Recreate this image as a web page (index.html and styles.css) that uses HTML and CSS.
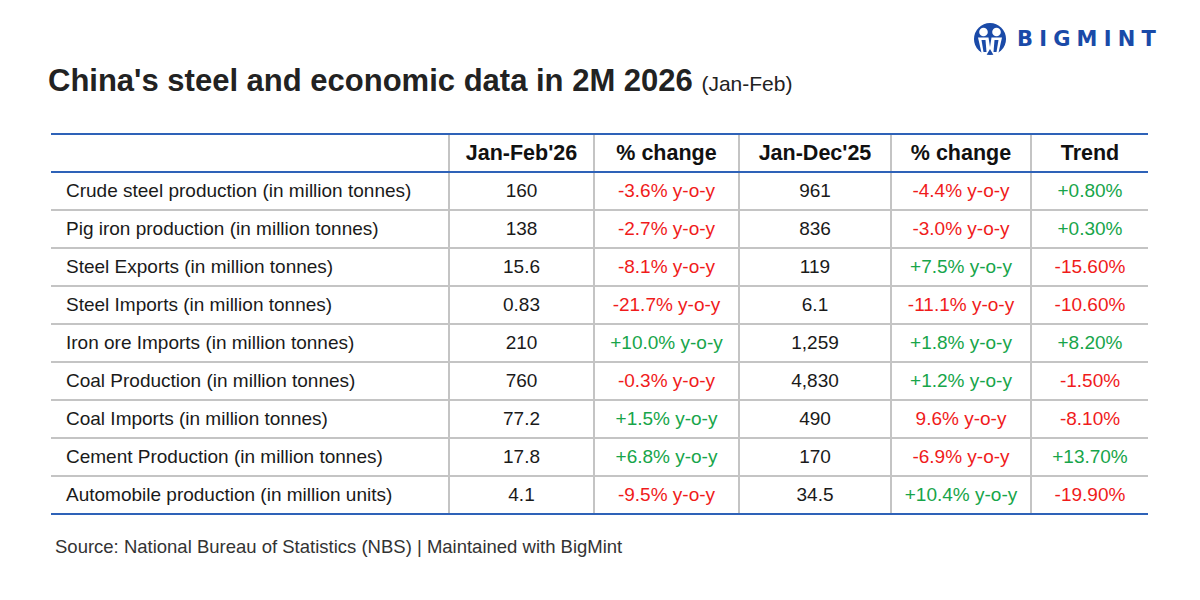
FILE: index.html
```html
<!DOCTYPE html>
<html>
<head>
<meta charset="utf-8">
<link rel="stylesheet" href="styles.css">
</head>
<body>
<div class="page">
  <div class="top">
    <div class="logo">
      <svg width="34" height="34" viewBox="0 0 34 34">
        <circle cx="17" cy="17" r="16" fill="#1a4aa8"/>
        <circle cx="10.5" cy="10" r="4.3" fill="#fff"/>
        <circle cx="23.5" cy="10" r="4.3" fill="#fff"/>
        <path d="M5 15.5 L15.5 15.5 L17 25 L18.5 15.5 L29 15.5 L25 33 L20.5 33 L17 27 L13.5 33 L9 33 Z" fill="#fff"/>
        <path d="M8.5 18 L12.5 18 L13.5 30 L10.5 30 Z" fill="#1a4aa8"/>
        <path d="M21.5 18 L25.5 18 L23.5 30 L20.5 30 Z" fill="#1a4aa8"/>
      </svg>
      <span class="brand">BIGMINT</span>
    </div>
  </div>
  <h1 class="title">China's steel and economic data in 2M 2026 <span class="sub">(Jan-Feb)</span></h1>
  <table class="data">
    <thead>
      <tr><th class="c1"></th><th class="c2">Jan-Feb'26</th><th class="c3">% change</th><th class="c4">Jan-Dec'25</th><th class="c5">% change</th><th class="c6">Trend</th></tr>
    </thead>
    <tbody>
      <tr><td class="lbl">Crude steel production (in million tonnes)</td><td>160</td><td class="neg">-3.6% y-o-y</td><td>961</td><td class="neg">-4.4% y-o-y</td><td class="pos">+0.80%</td></tr>
      <tr><td class="lbl">Pig iron production (in million tonnes)</td><td>138</td><td class="neg">-2.7% y-o-y</td><td>836</td><td class="neg">-3.0% y-o-y</td><td class="pos">+0.30%</td></tr>
      <tr><td class="lbl">Steel Exports (in million tonnes)</td><td>15.6</td><td class="neg">-8.1% y-o-y</td><td>119</td><td class="pos">+7.5% y-o-y</td><td class="neg">-15.60%</td></tr>
      <tr><td class="lbl">Steel Imports (in million tonnes)</td><td>0.83</td><td class="neg">-21.7% y-o-y</td><td>6.1</td><td class="neg">-11.1% y-o-y</td><td class="neg">-10.60%</td></tr>
      <tr><td class="lbl">Iron ore Imports (in million tonnes)</td><td>210</td><td class="pos">+10.0% y-o-y</td><td>1,259</td><td class="pos">+1.8% y-o-y</td><td class="pos">+8.20%</td></tr>
      <tr><td class="lbl">Coal Production (in million tonnes)</td><td>760</td><td class="neg">-0.3% y-o-y</td><td>4,830</td><td class="pos">+1.2% y-o-y</td><td class="neg">-1.50%</td></tr>
      <tr><td class="lbl">Coal Imports (in million tonnes)</td><td>77.2</td><td class="pos">+1.5% y-o-y</td><td>490</td><td class="neg">9.6% y-o-y</td><td class="neg">-8.10%</td></tr>
      <tr><td class="lbl">Cement Production (in million tonnes)</td><td>17.8</td><td class="pos">+6.8% y-o-y</td><td>170</td><td class="neg">-6.9% y-o-y</td><td class="pos">+13.70%</td></tr>
      <tr><td class="lbl">Automobile production (in million units)</td><td>4.1</td><td class="neg">-9.5% y-o-y</td><td>34.5</td><td class="pos">+10.4% y-o-y</td><td class="neg">-19.90%</td></tr>
    </tbody>
  </table>
  <p class="source">Source: National Bureau of Statistics (NBS) | Maintained with BigMint</p>
</div>
</body>
</html>
```
FILE: styles.css
```css
html, body {
  margin: 0;
  padding: 0;
  background: #ffffff;
}
body {
  font-family: "Liberation Sans", Arial, sans-serif;
  color: #1a1a1a;
  width: 1200px;
  height: 600px;
  overflow: hidden;
}
.page {
  padding: 22px 44px 0 48px;
  display: flex;
  flex-direction: column;
}
.top {
  display: flex;
  justify-content: flex-end;
  height: 34px;
  margin-right: 0;
}
.logo {
  display: flex;
  align-items: center;
  gap: 10px;
}
.logo svg {
  display: block;
}
.brand {
  font-family: "DejaVu Sans", "Liberation Sans", sans-serif;
  font-weight: bold;
  font-size: 21px;
  letter-spacing: 6.2px;
  color: #1a4aa8;
  margin-right: -6px;
}
.title {
  margin: 5px 0 0 0;
  font-size: 31px;
  font-weight: bold;
  color: #222222;
  line-height: 40px;
}
.title .sub {
  font-size: 21px;
  font-weight: normal;
}
.data {
  margin: 29px 0 0 3px;
  border-collapse: collapse;
  width: 1097px;
  table-layout: fixed;
  font-size: 19px;
}
.data th {
  font-size: 21.5px;
  font-weight: bold;
  color: #111;
  height: 36px;
  border-top: 2px solid #2e62b8;
  border-bottom: 2px solid #2e62b8;
  border-left: 2px solid #c4c4c4;
  text-align: center;
  padding: 0;
}
.data th.c1 { border-left: none; width: 397px; }
.data th.c2 { width: 143px; }
.data th.c3 { width: 143px; }
.data th.c4 { width: 150px; }
.data th.c5 { width: 138px; }
.data td {
  height: 36px;
  padding: 0;
  text-align: center;
  border-left: 2px solid #c4c4c4;
  border-bottom: 2px solid #c4c4c4;
  color: #1a1a1a;
}
.data tbody tr:last-child td {
  border-bottom: 2px solid #2e62b8;
}
.data td.lbl {
  text-align: left;
  padding-left: 15px;
  border-left: none;
}
.data td.neg { color: #f01b1b; }
.data td.pos { color: #17a54a; }
.source {
  margin: 21px 0 0 7px;
  font-size: 18.5px;
  color: #333333;
}
```
